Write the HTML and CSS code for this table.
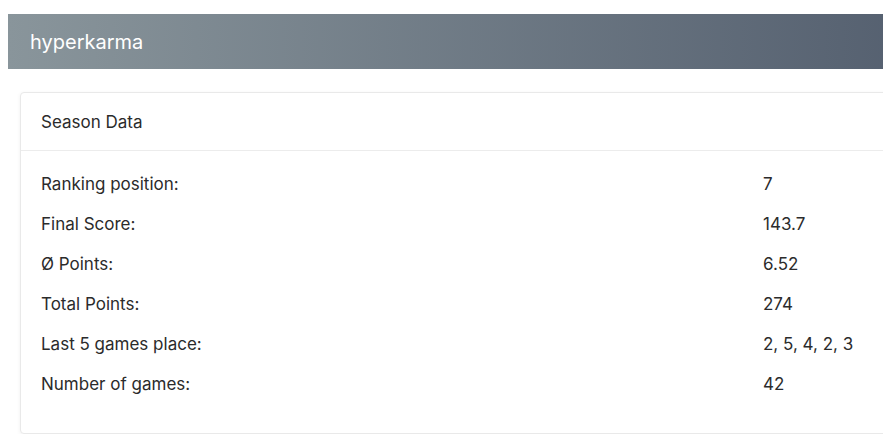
FILE: index.html
```html
<!DOCTYPE html>
<html lang="en">
<head>
    <meta charset="UTF-8">
    <meta name="viewport" content="width=device-width, initial-scale=1.0">
    <title>hyperkarma</title>
    <link rel="stylesheet" href="styles.css">
</head>
<body>

    <!-- Top bar -->
    <div class="topbar">
        <span class="brand">hyperkarma</span>
    </div>

    <div class="content">
        <div class="card">
            <div class="card-header">Season Data</div>
            <div class="card-body">
                <div class="stat-row"><span class="stat-label">Ranking position:</span><span class="stat-value">7</span></div>
                <div class="stat-row"><span class="stat-label">Final Score:</span><span class="stat-value">143.7</span></div>
                <div class="stat-row"><span class="stat-label">Ø Points:</span><span class="stat-value">6.52</span></div>
                <div class="stat-row"><span class="stat-label">Total Points:</span><span class="stat-value">274</span></div>
                <div class="stat-row"><span class="stat-label">Last 5 games place:</span><span class="stat-value">2, 5, 4, 2, 3</span></div>
                <div class="stat-row"><span class="stat-label">Number of games:</span><span class="stat-value">42</span></div>
            </div>
        </div>
    </div>

</body>
</html>
```

FILE: styles.css
```css
html, body { margin: 0; overflow: hidden; }
body {
    font-family: Inter, "Open Sans", sans-serif;
    color: #2b2b2b;
    background: #fff;
    padding: 14px 0 0 8px;
}
.topbar {
    width: 1000px;
    height: 55px;
    display: flex;
    align-items: center;
    padding-left: 22px;
    background: linear-gradient(to right, #89959b, #4e596a);
}
.brand { color: #fff; font-size: 20px; }
.content { padding: 23px 0 0 12px; }
.card {
    width: 1000px;
    border: 1px solid #e9e9e9;
    border-radius: 4px;
    box-shadow: 0 1px 4px rgba(0, 0, 0, 0.06);
    background: #fff;
}
.card-header {
    height: 57px;
    display: flex;
    align-items: center;
    padding: 0 20px;
    font-size: 17px;
    border-bottom: 1px solid #ececec;
}
.card-body { padding: 13px 20px 29px; }
.stat-row {
    display: grid;
    grid-template-columns: 722px 1fr;
    height: 40px;
    align-items: center;
    font-size: 17px;
}
```
